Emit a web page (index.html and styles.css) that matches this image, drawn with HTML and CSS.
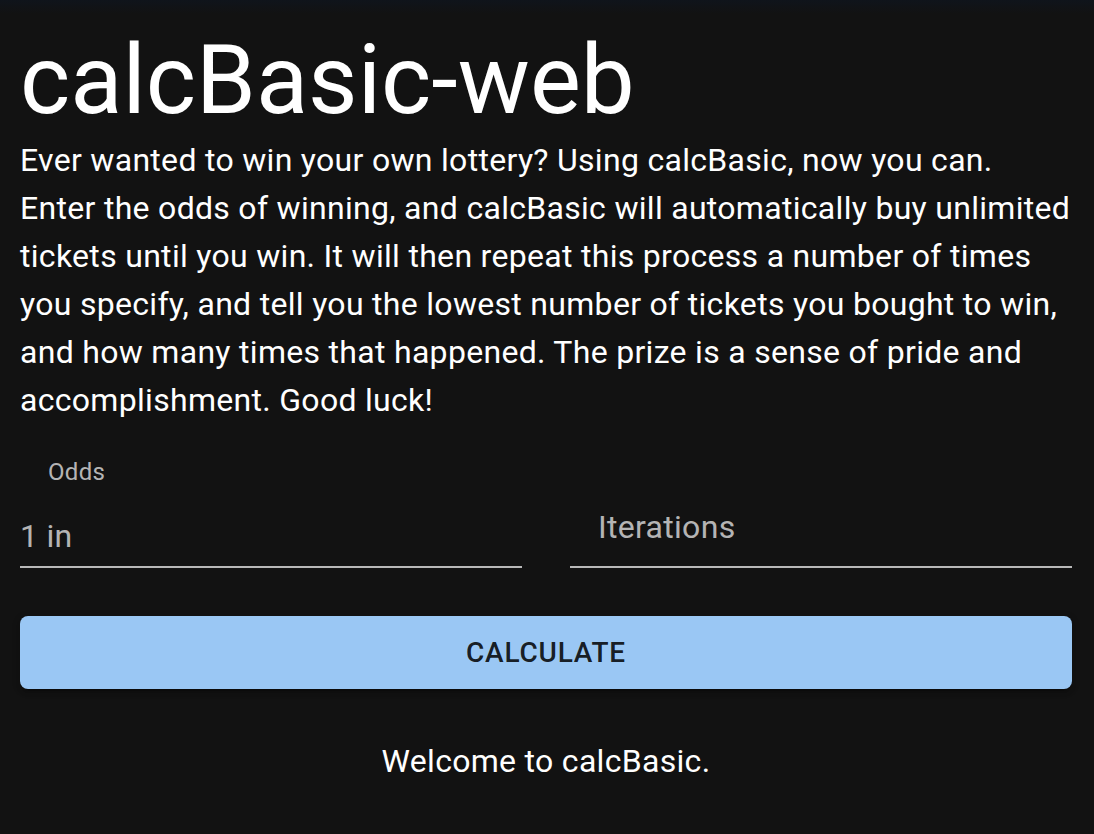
FILE: index.html
```html
<!DOCTYPE html>
<html lang="en">
<head>
<meta charset="utf-8">
<title>calcBasic-web</title>
<link rel="stylesheet" href="styles.css">
</head>
<body>
<main class="page">
  <h1 class="title">calcBasic-web</h1>
  <p class="intro">Ever wanted to win your own lottery? Using calcBasic, now you can. Enter the odds of winning, and calcBasic will automatically buy unlimited tickets until you win. It will then repeat this process a number of times you specify, and tell you the lowest number of tickets you bought to win, and how many times that happened. The prize is a sense of pride and accomplishment. Good luck!</p>
  <div class="fields">
    <label class="field">
      <span class="label label-shrunk">Odds</span>
      <span class="input-row">
        <span class="adornment">1 in</span>
        <input class="input" type="text">
      </span>
    </label>
    <label class="field">
      <span class="label label-rest">Iterations</span>
      <span class="input-row">
        <input class="input" type="text">
      </span>
    </label>
  </div>
  <button class="calc-btn" type="button">Calculate</button>
  <p class="status">Welcome to calcBasic.</p>
</main>
</body>
</html>
```
FILE: styles.css
```css
html {
  background: linear-gradient(to bottom, #0f141b 0, #121212 14px) no-repeat, #121212;
  min-height: 100%;
}
body {
  margin: 0;
  color: #ffffff;
  font-family: Roboto, "Liberation Sans", sans-serif;
}
.page {
  padding: 24px 22px 0 20px;
}
.title {
  margin: 0;
  font-size: 96px;
  font-weight: 400;
  line-height: 112px;
  letter-spacing: 0;
}
.intro {
  margin: 0;
  font-size: 32px;
  line-height: 48px;
  letter-spacing: 0.3px;
}
.fields {
  display: grid;
  grid-template-columns: 1fr 1fr;
  column-gap: 48px;
  margin-top: 48px;
}
.field {
  position: relative;
  display: block;
  padding-top: 32px;
}
.label {
  position: absolute;
  left: 28px;
  color: rgba(255, 255, 255, 0.7);
  letter-spacing: 0.3px;
  pointer-events: none;
}
.label-shrunk {
  top: -17px;
  font-size: 24px;
  line-height: 34px;
}
.label-rest {
  top: 32px;
  font-size: 32px;
  line-height: 46px;
}
.input-row {
  display: flex;
  align-items: center;
  height: 64px;
  box-sizing: border-box;
  padding: 10px 0 8px;
  border-bottom: 2px solid rgba(255, 255, 255, 0.7);
}
.adornment {
  font-size: 32px;
  line-height: 46px;
  color: rgba(255, 255, 255, 0.7);
  letter-spacing: 0.3px;
  margin-right: 16px;
  white-space: nowrap;
}
.input {
  flex: 1;
  min-width: 0;
  border: 0;
  outline: 0;
  background: transparent;
  color: #fff;
  font: inherit;
  font-size: 32px;
  line-height: 46px;
  padding: 0;
}
.calc-btn {
  display: block;
  width: 100%;
  height: 73px;
  margin-top: 48px;
  border: 0;
  border-radius: 8px;
  background: #9ac7f4;
  color: rgba(0, 0, 0, 0.87);
  font-family: Roboto, "Liberation Sans", sans-serif;
  font-size: 28px;
  font-weight: 500;
  letter-spacing: 0.8px;
  text-transform: uppercase;
  box-shadow: 0 6px 2px -4px rgba(0, 0, 0, 0.2), 0 4px 4px 0 rgba(0, 0, 0, 0.14), 0 2px 10px 0 rgba(0, 0, 0, 0.12);
  cursor: pointer;
}
.status {
  margin: 48px 0 0;
  text-align: center;
  font-size: 32px;
  line-height: 48px;
  letter-spacing: 0.3px;
}
```
